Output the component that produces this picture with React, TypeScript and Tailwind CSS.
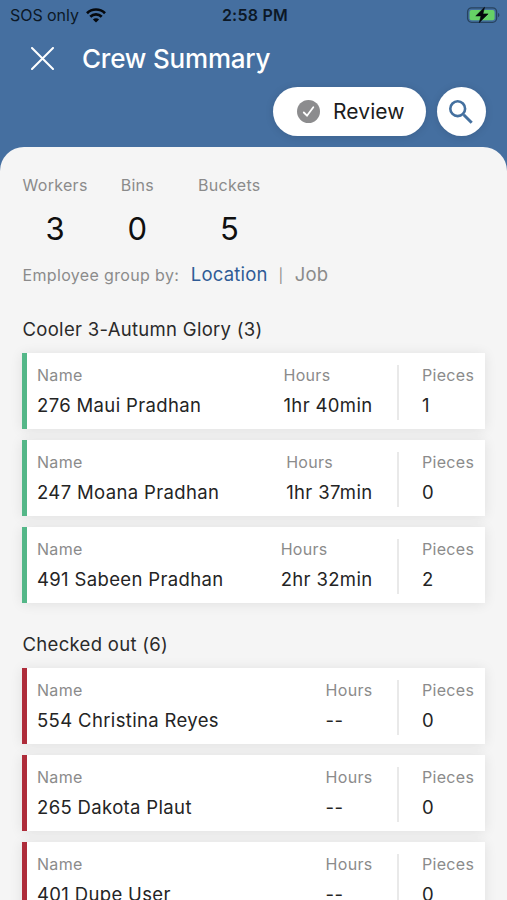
import clsx from "clsx";
import { useState } from "react";

type Worker = {
  name: string;
  hours: string;
  pieces: number;
};

type Group = {
  title: string;
  status: "in" | "out";
  workers: Worker[];
};

const groups: Group[] = [
  {
    title: "Cooler 3-Autumn Glory (3)",
    status: "in",
    workers: [
      { name: "276 Maui Pradhan", hours: "1hr 40min", pieces: 1 },
      { name: "247 Moana Pradhan", hours: "1hr 37min", pieces: 0 },
      { name: "491 Sabeen Pradhan", hours: "2hr 32min", pieces: 2 },
    ],
  },
  {
    title: "Checked out (6)",
    status: "out",
    workers: [
      { name: "554 Christina Reyes", hours: "--", pieces: 0 },
      { name: "265 Dakota Plaut", hours: "--", pieces: 0 },
      { name: "401 Dupe User", hours: "--", pieces: 0 },
    ],
  },
];

function StatusBar() {
  return (
    <div className="grid h-[30px] grid-cols-3 items-center pl-[10px] pr-[7px] text-[#0c1826]">
      <div className="flex items-center gap-[7px]">
        <span className="whitespace-nowrap text-[16px] tracking-[-0.05px]">SOS only</span>
        <svg width="20" height="15" viewBox="0 0 20 15" fill="none" stroke="#05080c" strokeWidth="2.7">
          <path d="M1 5.2a12.8 12.8 0 0 1 18 0" />
          <path d="M4.3 8.8a8.1 8.1 0 0 1 11.4 0" />
          <path d="M10 14.6 6.9 11.5a4.4 4.4 0 0 1 6.2 0z" fill="#05080c" stroke="none" />
        </svg>
      </div>
      <span className="whitespace-nowrap text-center text-[16px] font-semibold tracking-[0.25px]">2:58 PM</span>
      <svg className="justify-self-end" width="34" height="18" viewBox="0 0 34 18">
        <rect x="1.6" y="1.9" width="29" height="14.4" rx="4" fill="none" stroke="#27435f" strokeWidth="1.3" />
        <rect x="3.6" y="3.9" width="25" height="10.4" rx="2" fill="#66d166" />
        <path d="M32 7v4.2c1-.4 1.4-1.1 1.4-2.1S33 7.4 32 7z" fill="#27435f" />
        <path
          d="M18.5 1.3 9.8 9.9h5.2l-1.7 6.7 8.8-8.7h-5.2z"
          fill="#05080c"
          stroke="#05080c"
          strokeWidth=".6"
          strokeLinejoin="round"
        />
      </svg>
    </div>
  );
}

function Header() {
  return (
    <header className="h-[147px] shrink-0">
      <StatusBar />
      <div className="flex h-[56px] items-center gap-[28px] pl-[31px]">
        <button type="button" aria-label="Close">
          <svg width="23" height="23" viewBox="0 0 23 23" stroke="white" strokeWidth="2" strokeLinecap="round">
            <path d="M1 1 22 22M22 1 1 22" />
          </svg>
        </button>
        <h1 className="text-[26px] font-medium tracking-[-0.2px] text-white">Crew Summary</h1>
      </div>
      <div className="flex justify-end gap-[11px] pr-[21px] pt-px">
        <button
          type="button"
          className="flex h-[49px] w-[153px] items-center gap-[13px] rounded-full bg-white pl-6 text-[21px] tracking-[0.1px] text-[#1c1c1c] shadow-[0_1px_8px_rgba(0,0,0,0.12)]"
        >
          <svg width="23" height="23" viewBox="0 0 23 23" fill="none">
            <circle cx="11.5" cy="11.5" r="11.5" fill="#8c8c8e" />
            <path d="m6.8 12.5 3.2 3.2 6.3-8.5" stroke="white" strokeWidth="1.8" strokeLinecap="round" />
          </svg>
          Review
        </button>
        <button
          type="button"
          aria-label="Search"
          className="flex size-[49px] items-center justify-center rounded-full bg-white pr-0.5 shadow-[0_1px_8px_rgba(0,0,0,0.12)]"
        >
          <svg width="24" height="24" viewBox="0 0 24 24" fill="none" stroke="#44709f">
            <circle cx="8.7" cy="8.7" r="7.4" strokeWidth="2.6" />
            <path d="m14.7 14.7 8 8" strokeWidth="3" />
          </svg>
        </button>
      </div>
    </header>
  );
}

function Total({ label, value }: { label: string; value: number }) {
  return (
    <div className="flex flex-col items-center">
      <span className="text-[16px] leading-5 tracking-[0.3px] text-[#8b8b8b]">{label}</span>
      <span className="mt-[14px] text-[31px] leading-10 text-[#0f0f0f]">{value}</span>
    </div>
  );
}

function Field({ label, value }: { label: string; value: string | number }) {
  return (
    <div className="flex flex-col whitespace-nowrap">
      <span className="text-[16px] leading-5 tracking-[0.3px] text-[#8b8b8b]">{label}</span>
      <span className="mt-2 text-[18.5px] leading-6 tracking-[0.35px] text-[#242424]">{value}</span>
    </div>
  );
}

function WorkerCard({ worker, status }: { worker: Worker; status: Group["status"] }) {
  return (
    <div
      className={clsx(
        "flex h-[76px] items-start border-l-[5px] bg-white pl-[10px] pr-[10px] pt-3 shadow-[0_1px_12px_rgba(0,0,0,0.09)]",
        status === "in" ? "border-[#54b788]" : "border-[#ae2c3a]",
      )}
    >
      <Field label="Name" value={worker.name} />
      <div className="ml-auto">
        <Field label="Hours" value={worker.hours} />
      </div>
      <div className="ml-6 h-[55px] w-[2px] bg-[#e9e9e9]" />
      <div className="ml-[23.5px] w-[53px]">
        <Field label="Pieces" value={worker.pieces} />
      </div>
    </div>
  );
}

export default function App() {
  const [groupBy, setGroupBy] = useState<"Location" | "Job">("Location");

  return (
    <div className="flex h-[900px] w-[507px] flex-col overflow-hidden bg-[#456fa0] font-['Inter','Liberation_Sans',sans-serif]">
      <Header />
      <main className="flex-1 overflow-hidden rounded-t-[24px] bg-[#f5f5f5] px-[22px] pt-[28px]">
        <div className="flex pl-[0.5px]">
          <Total label="Workers" value={3} />
          <div className="ml-[33px]">
            <Total label="Bins" value={0} />
          </div>
          <div className="ml-[44px]">
            <Total label="Buckets" value={5} />
          </div>
        </div>

        <div className="mt-[12px] flex h-[27px] items-baseline whitespace-nowrap pl-[0.5px] text-[#8b8b8b]">
          <span className="text-[16px] tracking-[0.35px]">Employee group by:</span>
          {(["Location", "Job"] as const).map((option, i) => (
            <div key={option} className="flex items-baseline">
              {i > 0 && <span className="ml-[11px] text-[14px]">|</span>}
              <button
                type="button"
                onClick={() => setGroupBy(option)}
                className={clsx("ml-[11.5px] text-[18.5px] tracking-[0.2px]", groupBy === option && "text-[#2f5b96]")}
              >
                {option}
              </button>
            </div>
          ))}
        </div>

        {groups.map((group) => (
          <section key={group.title} className="mb-[29px] mt-[29px]">
            <h2 className="pl-[0.5px] text-[18.5px] leading-6 tracking-[0.3px] text-[#2a2a2a]">{group.title}</h2>
            <div className="mt-3 flex flex-col gap-[11px]">
              {group.workers.map((worker) => (
                <WorkerCard key={worker.name} worker={worker} status={group.status} />
              ))}
            </div>
          </section>
        ))}
      </main>
    </div>
  );
}
